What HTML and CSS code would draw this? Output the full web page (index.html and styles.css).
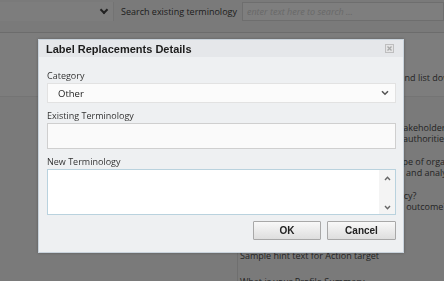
FILE: index.html
```html
<!DOCTYPE html>
<html lang="en">

<head>
    <meta charset="UTF-8">
    <meta name="viewport" content="width=device-width, initial-scale=1.0">
    <title>Label Replacements</title>
    <link rel="stylesheet" href="styles.css">
</head>

<body>
    <div class="page">
        <div class="toolbar">
            <div class="filter-select"><span class="chevron"></span></div>
            <label class="search-label" for="search">Search existing terminology</label>
            <input class="search-input" id="search" type="text" placeholder="enter text here to search ...">
        </div>
        <div class="band">
            <div class="band-left"></div>
            <div class="band-right">
                <p>Identify the terms used in your sector and list down</p>
            </div>
        </div>
        <div class="content">
            <div class="content-left"></div>
            <div class="content-right">
                <p>Who are all the internal and external stakeholders<br>such as our partners, agencies or local authorities</p>
                <p>What is the expected size and all the type of organisation<br>to be targeted for their policy planning, and analysis?</p>
                <p>What is the overall objective of this policy?<br>What is the end result and an expected outcome?</p>
                <p class="hint">Sample hint text for Action target</p>
                <p>What is your Profile Summary</p>
            </div>
        </div>
    </div>

    <div class="overlay"></div>

    <div class="dialog">
        <div class="dialog-title">
            <span>Label Replacements Details</span>
            <span class="close-icon">
                <svg width="9" height="9" viewBox="0 0 9 9">
                    <rect x="0.5" y="0.5" width="8" height="8" fill="#e4e4e4" stroke="#b5b5b5" />
                    <path d="M2.5 2.5 L6.5 6.5 M6.5 2.5 L2.5 6.5" stroke="#9a9a9a" stroke-width="1.3" />
                </svg>
            </span>
        </div>
        <div class="dialog-body">
            <div class="field">
                <label>Category</label>
                <div class="select-box">
                    <span>Other</span>
                    <svg width="8" height="6" viewBox="0 0 8 6">
                        <path d="M1 1.2 L4 4.2 L7 1.2" fill="none" stroke="#555" stroke-width="1.6" />
                    </svg>
                </div>
            </div>
            <div class="field">
                <label>Existing Terminology</label>
                <div class="text-box"></div>
            </div>
            <div class="field">
                <label>New Terminology</label>
                <div class="text-area">
                    <div class="scrollbar">
                        <svg width="7" height="5" viewBox="0 0 7 5">
                            <path d="M1 4 L3.5 1.3 L6 4" fill="none" stroke="#666" stroke-width="1.4" />
                        </svg>
                        <svg width="7" height="5" viewBox="0 0 7 5">
                            <path d="M1 1 L3.5 3.7 L6 1" fill="none" stroke="#666" stroke-width="1.4" />
                        </svg>
                    </div>
                </div>
            </div>
            <div class="buttons">
                <button class="btn">OK</button>
                <button class="btn btn-cancel">Cancel</button>
            </div>
        </div>
    </div>
</body>

</html>
```

FILE: styles.css
```css
body {
    margin: 0;
    padding: 0;
    font-family: 'Open Sans', sans-serif;
    background-color: #f4f4f4;
    color: #3a3a3a;
    overflow: hidden;
}

/* page under the modal */
.page {
    width: 444px;
    height: 281px;
    overflow: hidden;
}

.toolbar {
    display: flex;
    align-items: flex-start;
    height: 33px;
    border-bottom: 1px solid #d8d8d8;
    box-sizing: border-box;
    padding-top: 2px;
}

.filter-select {
    width: 113px;
    height: 19px;
    background-color: #fafafa;
    border-right: 1px solid #e6e6e6;
    position: relative;
}

.chevron {
    position: absolute;
    right: 6px;
    top: 5px;
    width: 4px;
    height: 4px;
    border-right: 2px solid #444;
    border-bottom: 2px solid #444;
    transform: rotate(45deg);
}

.search-label {
    font-size: 9px;
    color: #3c3c3c;
    margin-left: 7px;
    line-height: 19px;
    white-space: nowrap;
}

.search-input {
    margin-left: 5px;
    flex: 1;
    height: 19px;
    box-sizing: border-box;
    border: 1px solid #dcdcdc;
    background-color: #fcfcfc;
    font-family: 'Open Sans', sans-serif;
    font-size: 9px;
    padding: 0 4px;
}

.search-input::placeholder {
    color: #d2d2d2;
    font-style: italic;
}

.band {
    display: grid;
    grid-template-columns: 237px 1fr;
    height: 64px;
    background-color: #fbfbfb;
    border-bottom: 1px solid #e8e8e8;
    box-sizing: border-box;
}

.band-right p,
.content-right p {
    margin: 0;
    font-size: 9px;
    line-height: 11px;
    color: #4a4a4a;
    white-space: nowrap;
}

.band-right {
    padding: 39px 0 0 3px;
    overflow: hidden;
}

.content {
    display: grid;
    grid-template-columns: 237px 1fr;
}

.content-right {
    border-left: 1px solid #dedede;
    padding: 25px 0 0 2px;
    height: 200px;
    overflow: hidden;
}

.content-right p {
    margin-bottom: 12px;
}

.content-right .hint {
    margin-top: 38px;
    margin-bottom: 15px;
}

/* modal */
.overlay {
    position: fixed;
    inset: 0;
    background-color: rgba(0, 0, 0, 0.5);
}

.dialog {
    position: fixed;
    left: 38px;
    top: 39px;
    width: 366px;
    height: 214px;
    box-sizing: border-box;
    background-color: #eef0f2;
    border: 1px solid #c9d3dc;
    box-shadow: 0 0 3px rgba(0, 0, 0, 0.25);
}

.dialog-title {
    display: flex;
    justify-content: space-between;
    align-items: center;
    height: 17px;
    padding: 0 9px 0 7px;
    background-color: #e5e7ea;
    font-family: 'Liberation Sans', Arial, sans-serif;
    font-weight: bold;
    font-size: 11px;
    color: #1c1c1c;
}

.close-icon {
    display: flex;
    opacity: 0.8;
}

.dialog-body {
    padding: 6px 7px 0 8px;
}

.field label {
    display: block;
    font-size: 9px;
    color: #333;
    line-height: 13px;
    margin: 6px 0 1px 0;
}

.select-box {
    display: flex;
    justify-content: space-between;
    align-items: center;
    height: 20px;
    box-sizing: border-box;
    padding: 0 6px 0 10px;
    background-color: #fbfbfb;
    border: 1px solid #e2e2e2;
    font-size: 9.5px;
    color: #222;
}

.text-box {
    height: 26px;
    box-sizing: border-box;
    background-color: #fafafa;
    border: 1px solid #cfcfcf;
}

.text-area {
    display: flex;
    justify-content: flex-end;
    height: 46px;
    box-sizing: border-box;
    background-color: #ffffff;
    border: 1px solid #b9d2de;
}

.scrollbar {
    width: 16px;
    display: flex;
    flex-direction: column;
    justify-content: space-between;
    align-items: center;
    padding: 6px 0 4px 0;
    background-color: #f4f4f4;
}

.buttons {
    display: flex;
    justify-content: flex-end;
    gap: 6px;
    margin-top: 6px;
}

.btn {
    width: 68px;
    height: 19px;
    font-family: 'Liberation Sans', Arial, sans-serif;
    font-weight: bold;
    font-size: 10px;
    color: #222;
    background: linear-gradient(#f8f8f8, #dedede);
    border: 1px solid #a8a8a8;
    border-radius: 1px;
    padding: 0;
}

.btn-cancel {
    width: 69px;
}
```
